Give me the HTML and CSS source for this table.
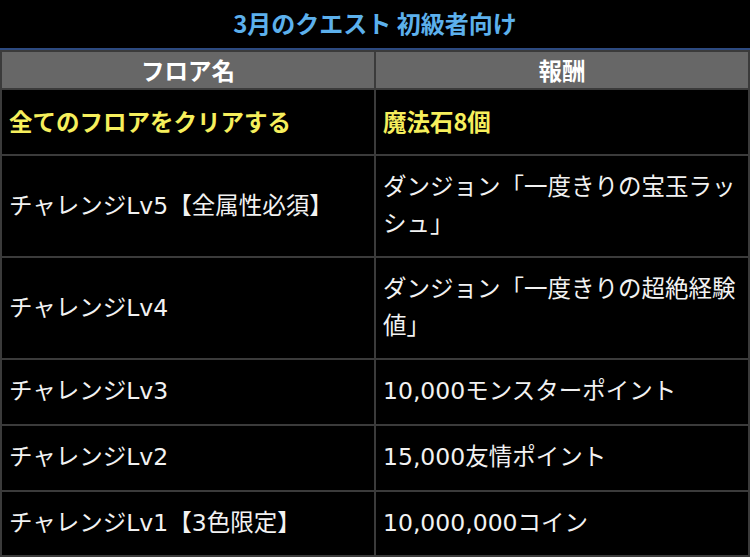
FILE: index.html
```html
<!DOCTYPE html>
<html lang="ja">
<head>
<meta charset="utf-8">
<title>3月のクエスト 初級者向け</title>
<link rel="stylesheet" href="styles.css">
</head>
<body>
<div class="page">
  <h1 class="title">3月のクエスト 初級者向け</h1>
  <table class="quest">
    <thead>
      <tr><th>フロア名</th><th>報酬</th></tr>
    </thead>
    <tbody>
      <tr class="highlight single"><td>全てのフロアをクリアする</td><td>魔法石8個</td></tr>
      <tr><td>チャレンジLv5【全属性必須】</td><td>ダンジョン「一度きりの宝玉ラッシュ」</td></tr>
      <tr><td>チャレンジLv4</td><td>ダンジョン「一度きりの超絶経験値」</td></tr>
      <tr class="single"><td>チャレンジLv3</td><td>10,000モンスターポイント</td></tr>
      <tr class="single"><td>チャレンジLv2</td><td>15,000友情ポイント</td></tr>
      <tr><td>チャレンジLv1【3色限定】</td><td>10,000,000コイン</td></tr>
    </tbody>
  </table>
</div>
</body>
</html>
```

FILE: styles.css
```css
html, body {
  margin: 0;
  padding: 0;
  background: #000;
}

body {
  font-family: "Noto Sans CJK JP", "Noto Sans", sans-serif;
  color: #f2f2f2;
  overflow: hidden;
}

.page {
  width: 750px;
}

.title {
  margin: 0;
  height: 48px;
  line-height: 46px;
  text-align: center;
  font-size: 24px;
  font-weight: 700;
  color: #5cb0ec;
  border-bottom: 2px solid #2d4a80;
}

.quest {
  width: 750px;
  border-collapse: collapse;
  table-layout: fixed;
}

.quest th,
.quest td {
  border: 2px solid #3b3b3b;
  width: 50%;
  font-size: 23.5px;
}

.quest th {
  background: #676767;
  color: #fff;
  font-weight: 700;
  height: 36px;
  padding: 0 7px;
  line-height: 36px;
  text-align: center;
}

.quest td {
  padding: 13px 7px 13px;
  line-height: 37px;
  text-align: left;
  vertical-align: middle;
  font-weight: 400;
  font-family: "DejaVu Sans", "Noto Sans CJK JP", sans-serif;
}

.quest .single td {
  padding-bottom: 14px;
}

.quest .highlight td {
  color: #f6ef5c;
  font-weight: 700;
  font-family: "Noto Sans CJK JP", sans-serif;
}
```
